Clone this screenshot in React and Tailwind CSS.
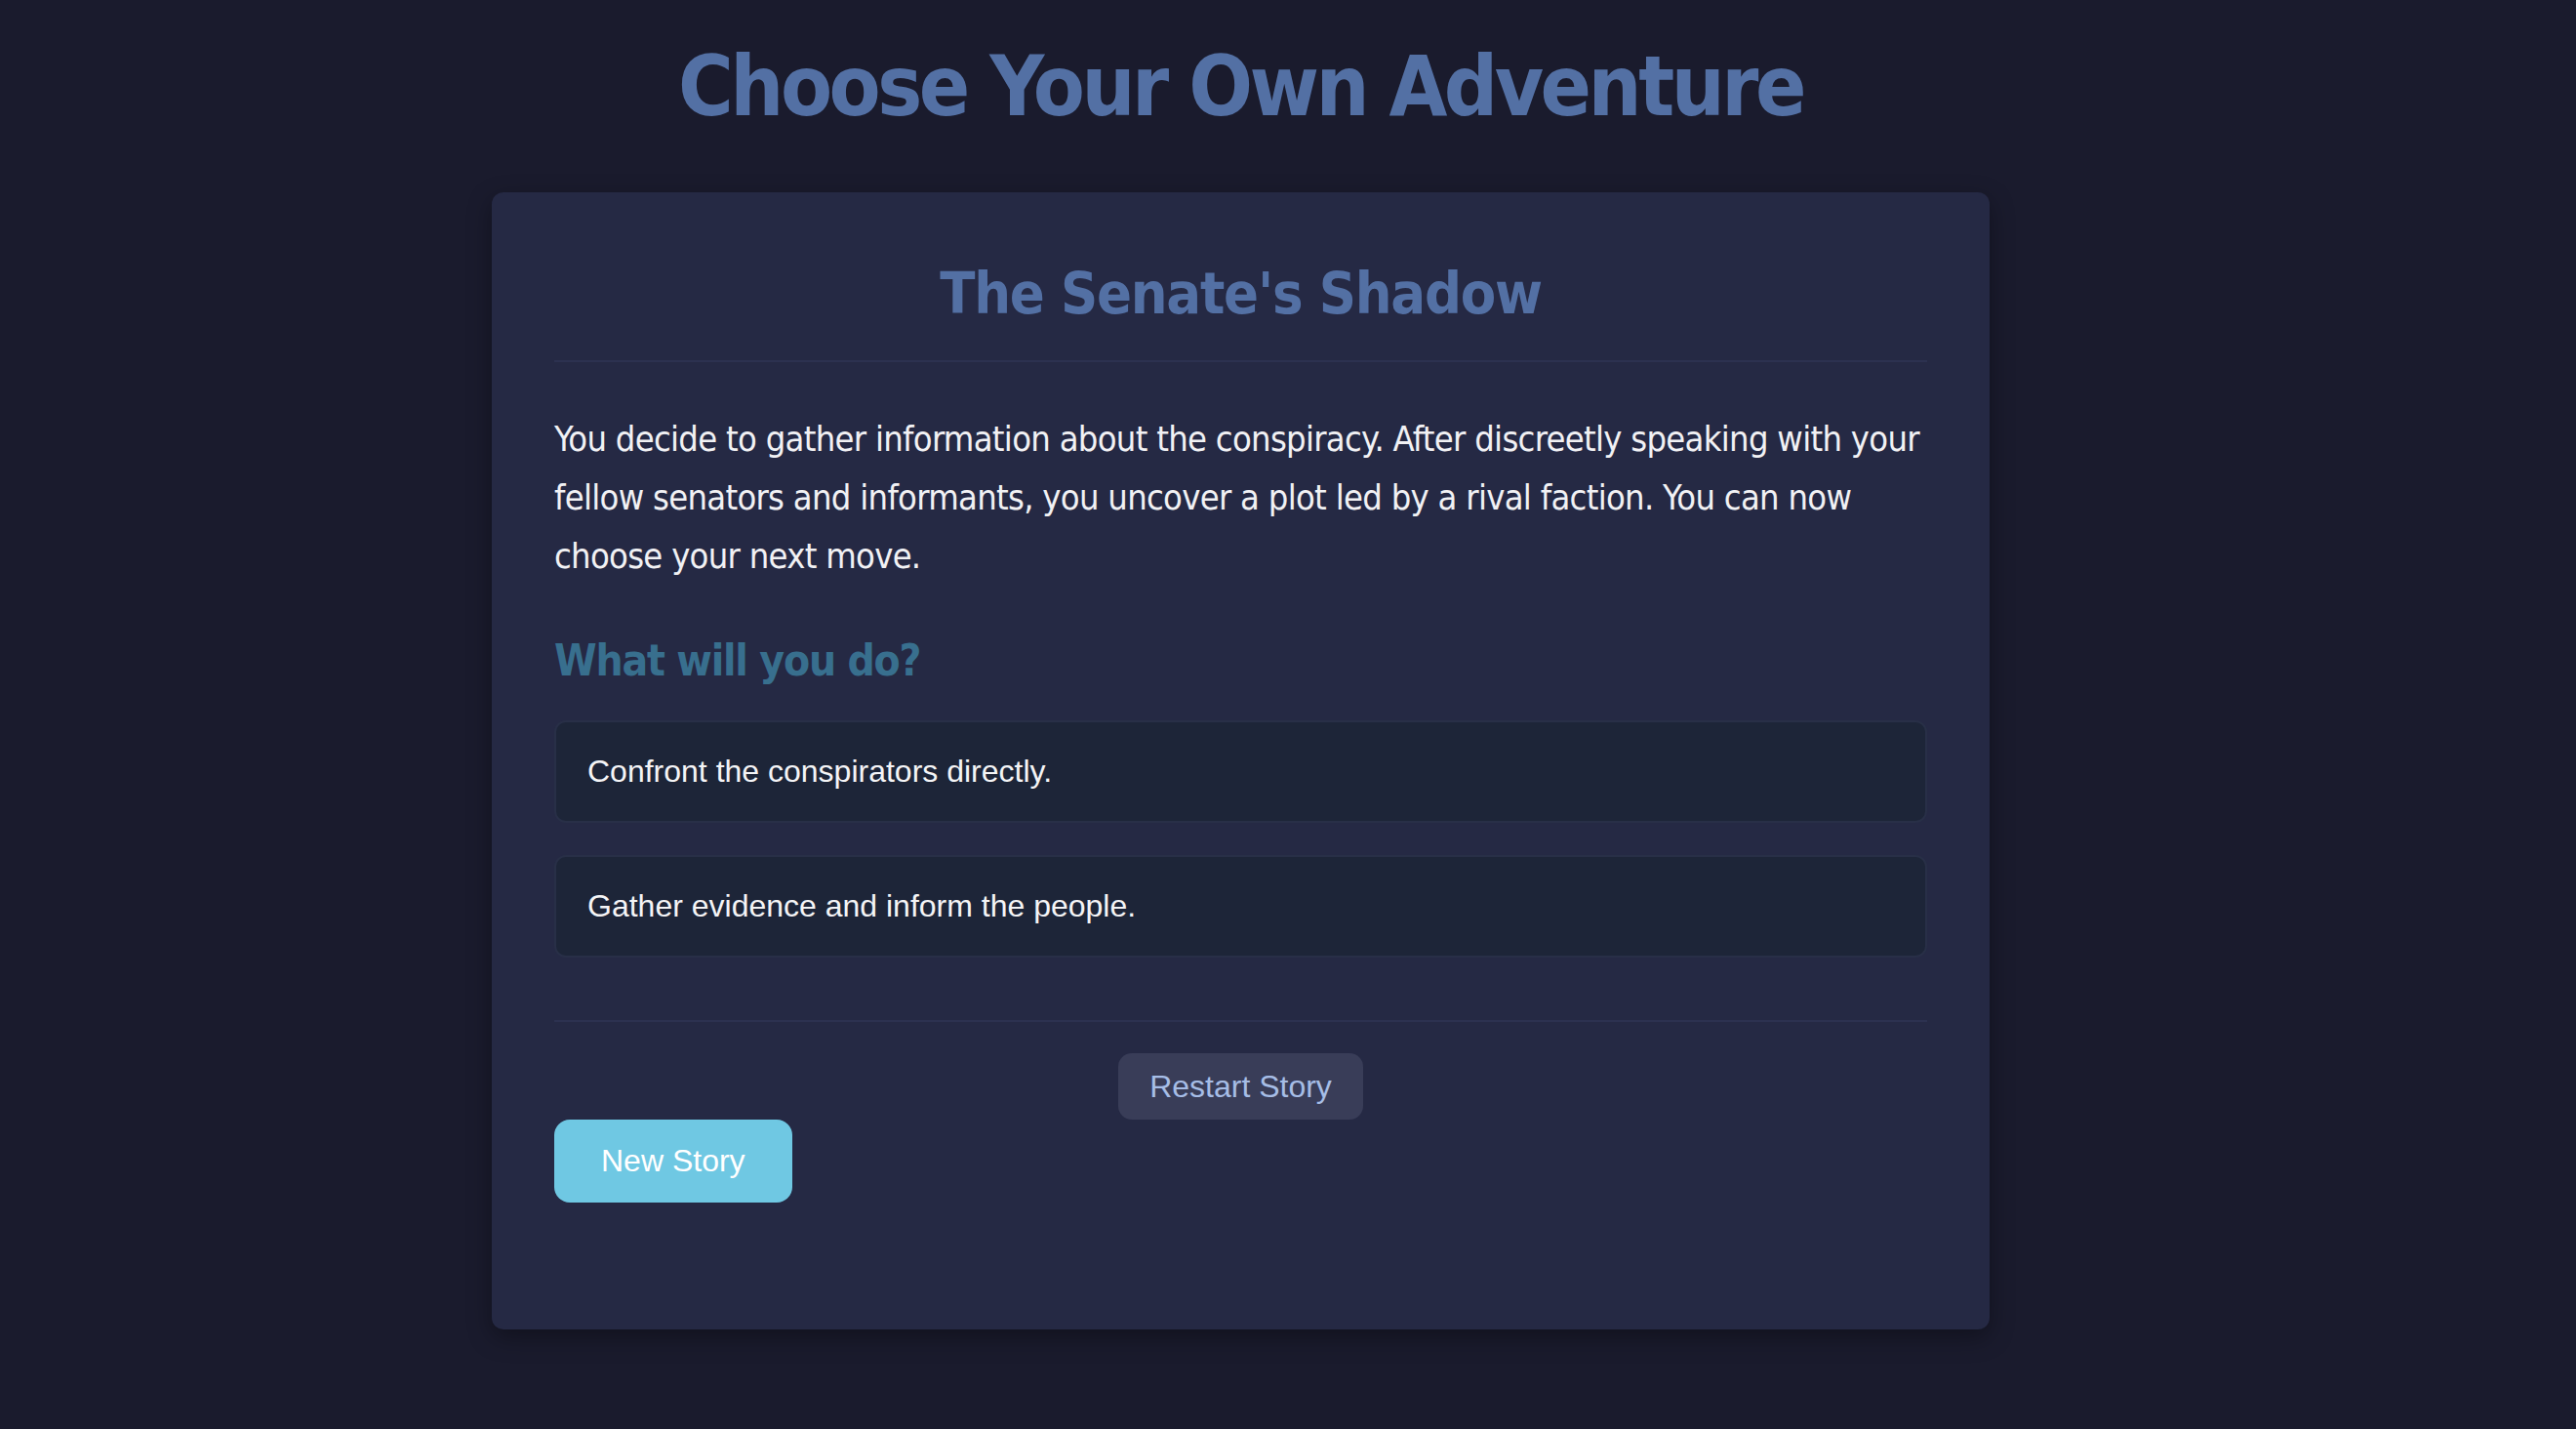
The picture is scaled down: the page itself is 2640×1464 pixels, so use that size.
import { useState } from "react";

const STORY = {
  title: "The Senate's Shadow",
  text: "You decide to gather information about the conspiracy. After discreetly speaking with your fellow senators and informants, you uncover a plot led by a rival faction. You can now choose your next move.",
  choices: [
    "Confront the conspirators directly.",
    "Gather evidence and inform the people.",
  ],
};

const HEADING_FONT = "font-['DejaVu_Sans_Condensed','DejaVu_Sans',sans-serif]";

export default function App() {
  const [picked, setPicked] = useState(null);

  return (
    <div className="min-h-screen bg-[#1a1b2d] font-['Liberation_Sans',Arial,sans-serif]">
      <div className="w-[2543px] flex flex-col items-center pt-[38px]">
        <h1
          className={`${HEADING_FONT} text-[86px] leading-[100px] font-bold text-[#5370a4] tracking-[-3.5px]`}
        >
          Choose Your Own Adventure
        </h1>

        {/* Story card */}
        <div className="mt-[59px] w-[1535px] rounded-[12px] bg-[#252944] p-[64px] shadow-[0_8px_24px_rgba(0,0,0,0.35)]">
          <h2
            className={`${HEADING_FONT} text-center text-[59px] leading-[80px] font-bold text-[#5370a4] tracking-[-1.2px] pb-[28px] border-b-2 border-[#2c3150]`}
          >
            {STORY.title}
          </h2>

          <p
            className={`${HEADING_FONT} mt-[49px] text-[36px] leading-[60px] tracking-[-0.7px] text-[#f1f1f4]`}
          >
            {STORY.text}
          </p>

          <h3
            className={`${HEADING_FONT} mt-[51px] text-[44px] leading-[51px] font-bold tracking-[-1.2px] text-[#386f8e]`}
          >
            What will you do?
          </h3>

          <div className="mt-[36px] flex flex-col gap-[33px]">
            {STORY.choices.map((choice, i) => (
              <button
                key={choice}
                onClick={() => setPicked(i)}
                className={`w-full text-left rounded-[12px] border-2 px-[32px] py-[32px] text-[32px] leading-[36.8px] text-[#f4f4f6] transition ${
                  picked === i
                    ? "bg-[#232c42] border-[#3a4466]"
                    : "bg-[#1d2538] border-[#282f47]"
                }`}
              >
                {choice}
              </button>
            ))}
          </div>

          {/* Actions */}
          <div className="mt-[64px] border-t-2 border-[#2c3150] pt-[32px]">
            <div className="flex justify-center">
              <button
                onClick={() => setPicked(null)}
                className="rounded-[14px] bg-[#393d58] px-[32px] py-[16px] text-[32px] leading-[36.8px] text-[#a6bde6]"
              >
                Restart Story
              </button>
            </div>
            <button className="mb-[66px] rounded-[16px] bg-[#6fc8e3] px-[48px] py-[24px] text-[32px] leading-[36.8px] text-white">
              New Story
            </button>
          </div>
        </div>
      </div>
    </div>
  );
}
